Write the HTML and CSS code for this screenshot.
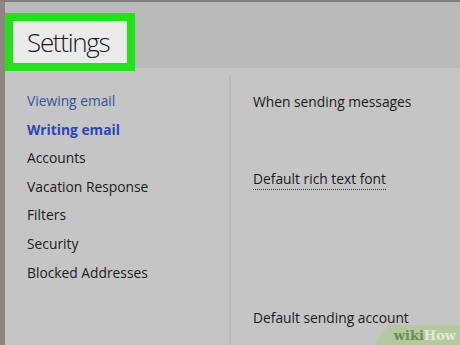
FILE: index.html
```html
<!DOCTYPE html>
<html>
<head>
<meta charset="utf-8">
<link rel="stylesheet" href="styles.css">
</head>
<body>
<div class="page">
  <header class="header">
    <div class="title-box"><h1 class="title">Settings</h1></div>
  </header>
  <div class="content">
    <nav class="nav">
      <a class="nav-item link">Viewing email</a>
      <a class="nav-item link active">Writing email</a>
      <a class="nav-item">Accounts</a>
      <a class="nav-item">Vacation Response</a>
      <a class="nav-item">Filters</a>
      <a class="nav-item">Security</a>
      <a class="nav-item">Blocked Addresses</a>
    </nav>
    <main class="main">
      <div class="section s1">When sending messages</div>
      <div class="section s2"><span class="dotted">Default rich text font</span></div>
      <div class="section s3">Default sending account</div>
    </main>
  </div>
  <div class="watermark"><span class="wiki">wiki</span><span class="how">How</span></div>
</div>
</body>
</html>
```
FILE: styles.css
```css
html, body {
  margin: 0;
  padding: 0;
}
body {
  width: 460px;
  height: 345px;
  overflow: hidden;
  background: #c5c5c5;
  font-family: "Open Sans", "Noto Sans", sans-serif;
  color: #1b1b1b;
}
.page {
  position: relative;
  width: 460px;
  height: 345px;
  box-sizing: border-box;
  border-top: 2px solid #7c7c7c;
  border-left: 5px solid #8d8682;
  display: flex;
  flex-direction: column;
}
.header {
  height: 66px;
  background: #bababa;
  flex: none;
}
.title-box {
  margin-top: 11px;
  width: 130px;
  height: 58px;
  box-sizing: border-box;
  border: 8px solid #22e21a;
  background: #ebebeb;
  display: flex;
  align-items: center;
}
.title {
  margin: 0 0 0 14px;
  font-family: "Open Sans", sans-serif;
  font-weight: 300;
  font-size: 26px;
  line-height: 1;
  color: #1a1a1a;
  letter-spacing: -1.3px;
}
.content {
  display: flex;
  flex: 1;
}
.nav {
  width: 224px;
  flex: none;
  padding: 19px 0 0 22px;
  box-sizing: border-box;
  display: flex;
  flex-direction: column;
}
.nav-item {
  font-size: 13.8px;
  line-height: 28.6px;
  height: 28.6px;
  color: #1b1b1b;
}
.link {
  color: #33539f;
}
.active {
  font-weight: 700;
  color: #2a48b4;
}
.main {
  flex: 1;
  margin-top: 7px;
  border-left: 2px solid #b9b9b9;
  padding-left: 22px;
  display: flex;
  flex-direction: column;
}
.section {
  font-size: 13.8px;
  line-height: 20px;
}
.s1 { margin-top: 17px; }
.s2 { margin-top: 57px; }
.s3 { margin-top: 119px; }
.dotted {
  border-bottom: 1px dotted #3a3a3a;
  padding-bottom: 1px;
}
.watermark {
  position: absolute;
  right: 0;
  bottom: 0;
  width: 86px;
  height: 20px;
  background: #b4c9a0;
  clip-path: polygon(14px 0, 100% 0, 100% 100%, 0 100%);
  display: flex;
  align-items: center;
  justify-content: flex-end;
  padding-right: 4px;
  box-sizing: border-box;
  font-family: "DejaVu Serif", "Liberation Serif", serif;
  font-weight: 700;
  font-size: 13px;
  line-height: 1;
}
.wiki { color: #6f8a5a; }
.how { color: #e2ead8; }
```
